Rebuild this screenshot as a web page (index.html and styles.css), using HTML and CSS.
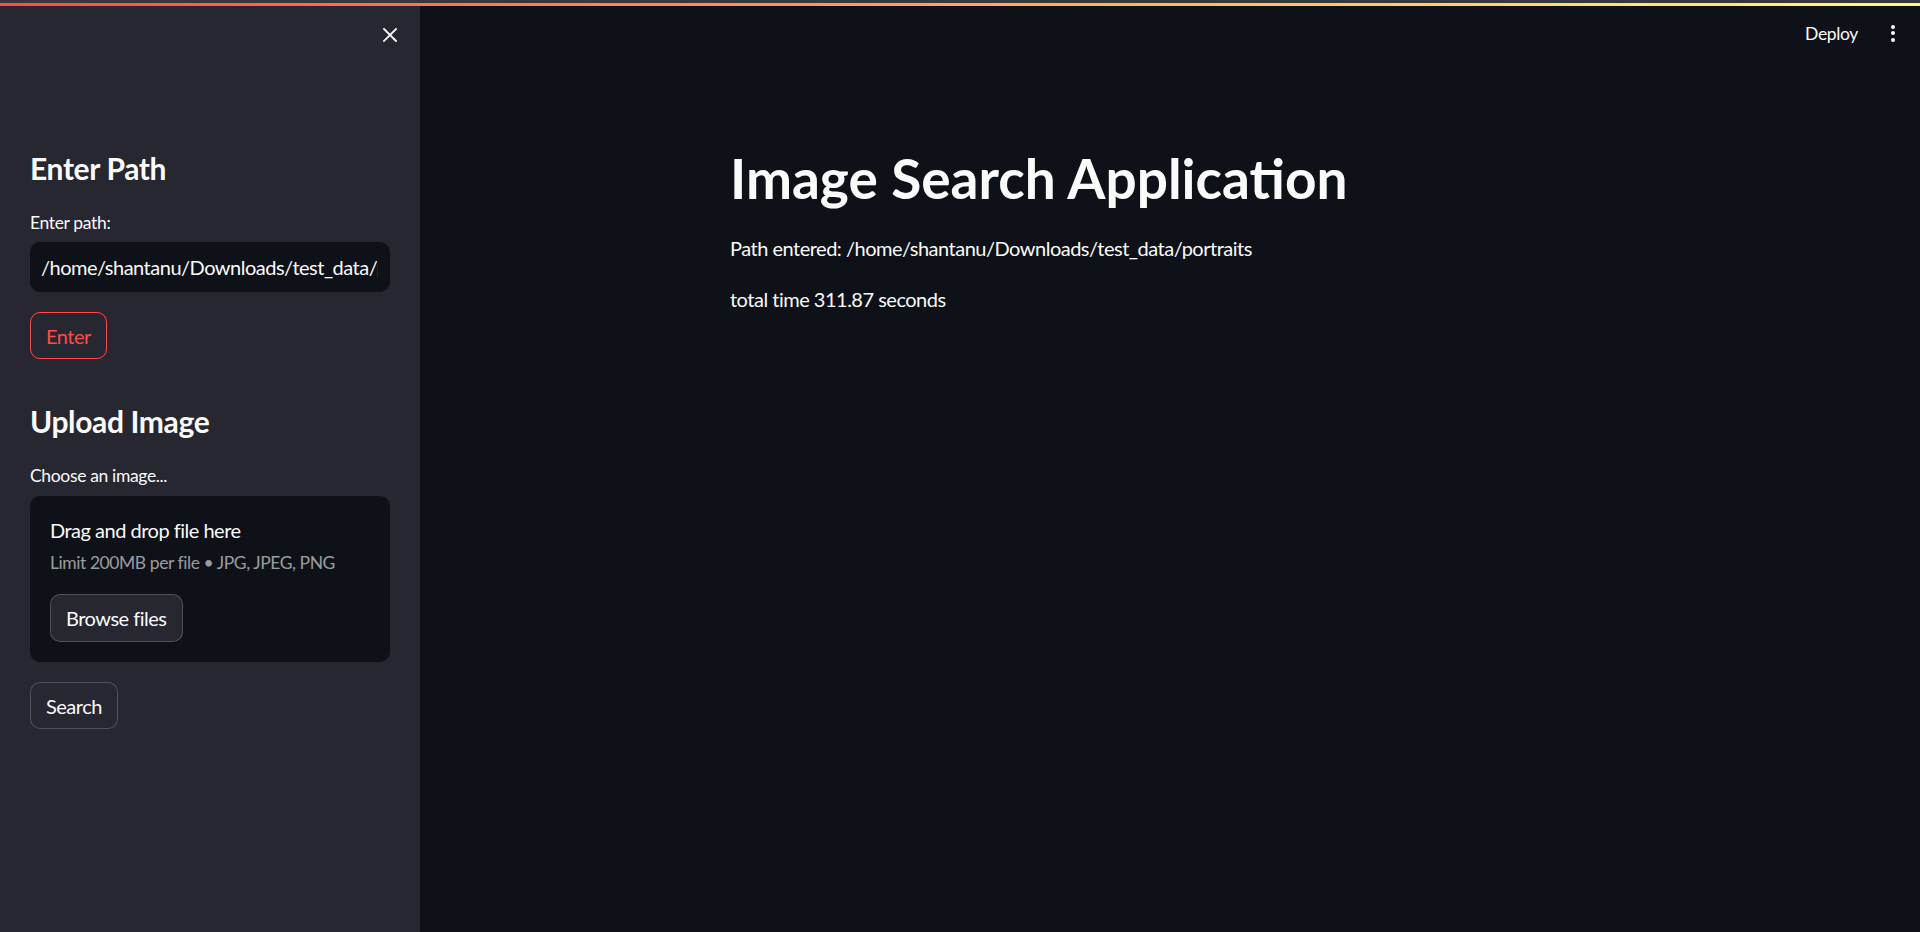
FILE: index.html
```html
<!DOCTYPE html>
<html lang="en">
<head>
<meta charset="utf-8">
<title>Image Search Application</title>
<link rel="stylesheet" href="styles.css">
</head>
<body>
<div class="app">
  <div class="top-strip"></div>
  <div class="decoration"></div>
  <div class="frame">
    <aside class="sidebar">
      <div class="sb-head">
        <svg class="close-icon" width="16" height="16" viewBox="0 0 16 16" aria-hidden="true">
          <path d="M2 2 L14 14 M14 2 L2 14" stroke="#fafafa" stroke-width="1.8" stroke-linecap="square" fill="none"/>
        </svg>
      </div>
      <div class="sb-content">
        <h2 class="sb-title first">Enter Path</h2>
        <label class="field-label">Enter path:</label>
        <div class="text-input"><span class="input-value">/home/shantanu/Downloads/test_data/portraits</span></div>
        <button class="btn btn-primary-outline">Enter</button>
        <h2 class="sb-title second">Upload Image</h2>
        <label class="field-label">Choose an image...</label>
        <div class="dropzone">
          <div class="dz-title">Drag and drop file here</div>
          <div class="dz-sub">Limit 200MB per file • JPG, JPEG, PNG</div>
          <button class="btn btn-secondary browse">Browse files</button>
        </div>
        <button class="btn btn-secondary search">Search</button>
      </div>
    </aside>
    <main class="main">
      <header class="main-head">
        <span class="deploy">Deploy</span>
        <span class="kebab"><i></i><i></i><i></i></span>
      </header>
      <section class="block">
        <h1 class="page-title">Image Search Application</h1>
        <p class="para">Path entered: /home/shantanu/Downloads/test_data/portraits</p>
        <p class="para">total time 311.87 seconds</p>
      </section>
    </main>
  </div>
</div>
</body>
</html>
```

FILE: styles.css
```css
* { box-sizing: border-box; }
html, body { margin: 0; padding: 0; height: 100%; }
body {
  background: #0e1117;
  color: #fafafa;
  font-family: "Lato", "Liberation Sans", sans-serif;
  overflow: hidden;
}
.app { display: flex; flex-direction: column; height: 932px; }
.top-strip { height: 3px; background: #383838; flex: none; }
.decoration { height: 3px; flex: none; background: linear-gradient(90deg, #ff4b4b, #fffd80); }
.frame { flex: 1; display: flex; min-height: 0; }

.sidebar { width: 420px; flex: none; background: #262730; display: flex; flex-direction: column; }
.sb-head { height: 58px; display: flex; align-items: center; justify-content: flex-end; padding-right: 22px; }
.close-icon { display: block; }
.sb-content { padding: 0 30px; display: flex; flex-direction: column; align-items: flex-start; }
.sb-title { margin: 0; font-size: 30px; line-height: 36px; font-weight: 700; color: #fafafa; letter-spacing: -0.012em; }
.sb-title.first { margin-top: 86px; }
.sb-title.second { margin-top: 44px; }
.field-label { display: block; font-size: 17.5px; line-height: 21px; margin-top: 26px; color: #fafafa; letter-spacing: -0.02em; }
.text-input {
  margin-top: 9px; width: 360px; height: 50px; background: #0e1117; border-radius: 10px;
  padding: 0 12px 0 11px; display: flex; align-items: center; overflow: hidden; white-space: nowrap;
  font-size: 20px; letter-spacing: -0.025em;
}
.input-value { display: block; overflow: hidden; width: 100%; }
.btn {
  font-family: inherit; font-size: 20px; line-height: 24px; border-radius: 10px; padding: 0 15px;
  background: #262730; color: #fafafa; border: 1px solid rgba(250,250,250,0.2); cursor: pointer;
  letter-spacing: -0.025em;
}
.btn-primary-outline { margin-top: 20px; height: 47px; color: #ff4b4b; border-color: #ff4b4b; }
.dropzone {
  margin-top: 10px; width: 360px; background: #0e1117; border-radius: 10px;
  padding: 22px 20px 20px; display: flex; flex-direction: column; align-items: flex-start;
}
.dz-title { font-size: 20px; line-height: 24px; letter-spacing: -0.025em; }
.dz-sub { margin-top: 10px; font-size: 17.5px; line-height: 21px; color: rgba(250,250,250,0.6); letter-spacing: -0.025em; }
.browse { margin-top: 21px; height: 48px; }
.search { margin-top: 20px; height: 47px; }

.main { flex: 1; display: flex; flex-direction: column; min-width: 0; }
.main-head { height: 54px; display: flex; align-items: center; justify-content: flex-end; padding-right: 25px; gap: 33px; }
.deploy { font-size: 17.5px; line-height: 21px; color: #fafafa; letter-spacing: -0.02em; }
.kebab { display: flex; flex-direction: column; gap: 2.5px; }
.kebab i { display: block; width: 4px; height: 4px; border-radius: 50%; background: #fafafa; }
.block { width: 920px; margin: 0 auto; padding: 0 20px; }
.page-title { margin: 85px 0 0; font-size: 55px; line-height: 66px; font-weight: 700; }
.para { margin: 21px 0 0; font-size: 20px; line-height: 32px; letter-spacing: -0.025em; }
.para + .para { margin-top: 19px; }
```
